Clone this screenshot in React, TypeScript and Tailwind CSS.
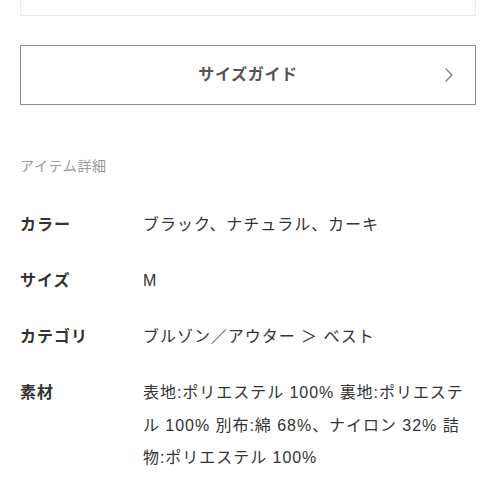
import { ChevronRight } from 'lucide-react';

const rows = [
  { label: 'カラー', value: 'ブラック、ナチュラル、カーキ' },
  { label: 'サイズ', value: 'M' },
  { label: 'カテゴリ', value: 'ブルゾン／アウター ＞ ベスト' },
  { label: '素材', value: '表地:ポリエステル 100% 裏地:ポリエステル 100% 別布:綿 68%、ナイロン 32% 詰物:ポリエステル 100%' },
];

export default function App() {
  return (
    <div
      className="w-[496px] h-[496px] overflow-hidden bg-white px-5 text-[#333]"
      style={{ fontFamily: '"Liberation Sans", "Noto Sans CJK JP", sans-serif' }}
    >
      {/* previous block, cut off at the top */}
      <div className="h-4 border border-t-0 border-[#ececec]" />

      {/* Size guide */}
      <button className="mt-[29px] w-full h-[60px] border-[1.5px] border-[#8c8c8c] flex items-center relative bg-white">
        <span className="flex-1 text-center text-[16px] font-bold text-[#555] tracking-[0.04em]">
          サイズガイド
        </span>
        <ChevronRight className="absolute right-[14px] w-6 h-6 text-[#777]" strokeWidth={1.2} />
      </button>

      {/* Item details */}
      <div className="mt-[51px] text-[14px] leading-5 text-[#999] tracking-[0.05em]">アイテム詳細</div>

      <div className="mt-[33px] flex flex-col gap-[23.5px]">
        {rows.map((row) => (
          <div key={row.label} className="flex text-[16px] leading-[32.5px] tracking-[0.06em]">
            <div className="w-[123px] shrink-0 font-bold text-[#333]">{row.label}</div>
            <div className="flex-1 text-[#333] pr-2">{row.value}</div>
          </div>
        ))}
      </div>
    </div>
  );
}
